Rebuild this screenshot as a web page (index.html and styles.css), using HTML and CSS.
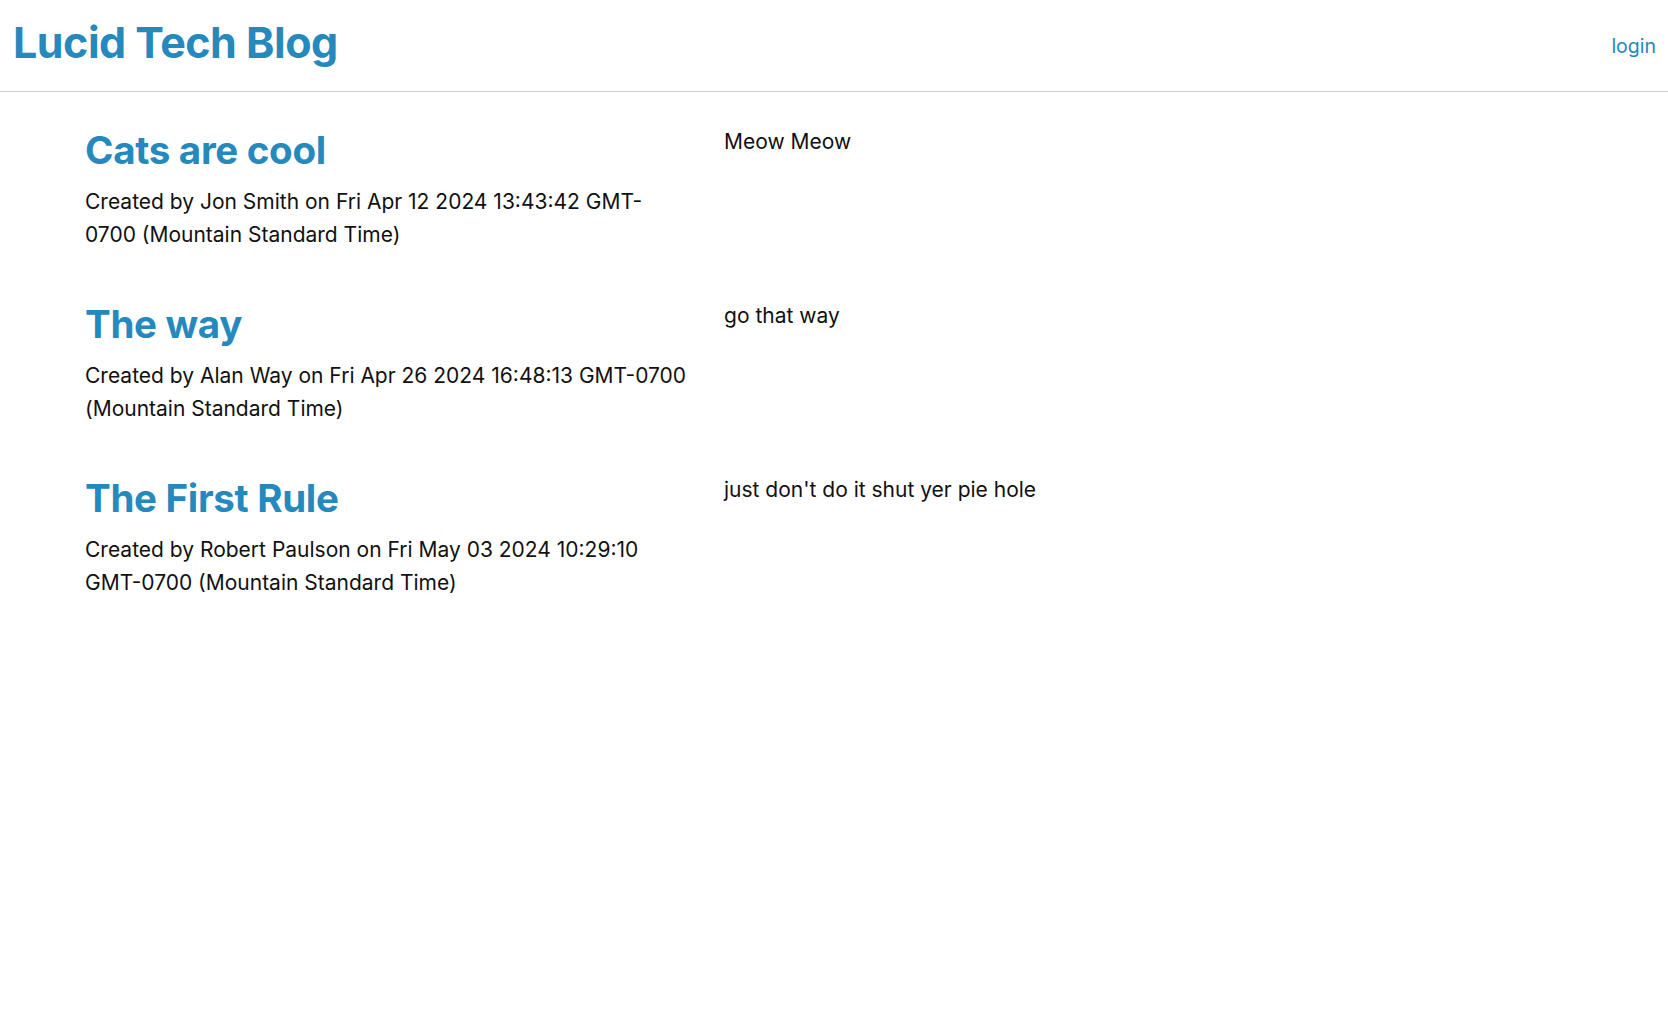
FILE: index.html
```html
<!DOCTYPE html>
<html lang="en">
<head>
<meta charset="utf-8">
<title>Lucid Tech Blog</title>
<link rel="stylesheet" href="styles.css">
</head>
<body>
<header class="topbar">
  <a class="brand" href="#">Lucid Tech Blog</a>
  <a class="login" href="#">login</a>
</header>
<main class="posts">
  <article class="post">
    <div class="post-head">
      <h2 class="post-title"><a href="#">Cats are cool</a></h2>
      <p class="meta">Created by Jon Smith on Fri Apr 12 2024 13:43:42 GMT-0700 (Mountain Standard Time)</p>
    </div>
    <p class="post-body">Meow Meow</p>
  </article>
  <article class="post">
    <div class="post-head">
      <h2 class="post-title"><a href="#">The way</a></h2>
      <p class="meta">Created by Alan Way on Fri Apr 26 2024 16:48:13 GMT-0700 (Mountain Standard Time)</p>
    </div>
    <p class="post-body">go that way</p>
  </article>
  <article class="post">
    <div class="post-head">
      <h2 class="post-title"><a href="#">The First Rule</a></h2>
      <p class="meta">Created by Robert Paulson on Fri May 03 2024 10:29:10 GMT-0700 (Mountain Standard Time)</p>
    </div>
    <p class="post-body">just don't do it shut yer pie hole</p>
  </article>
</main>
</body>
</html>
```
FILE: styles.css
```css
* { box-sizing: border-box; }
html, body { margin: 0; padding: 0; background: #fff; }
body {
  font-family: Inter, "Noto Sans", sans-serif;
  color: #111;
}
a { text-decoration: none; color: #2589bd; }

.topbar {
  height: 92px;
  border-bottom: 1px solid #cfcfcf;
  display: flex;
  justify-content: space-between;
  align-items: flex-start;
  padding: 0 12px 0 13px;
}
.brand {
  font-size: 43px;
  font-weight: 700;
  letter-spacing: -0.5px;
  line-height: 53px;
  margin-top: 16px;
}
.login {
  font-size: 19.5px;
  line-height: 24px;
  margin-top: 34px;
}

.posts {
  display: flex;
  flex-direction: column;
  gap: 48px;
  padding: 33px 85px;
}
.post {
  display: grid;
  grid-template-columns: 604px 1fr;
  column-gap: 35px;
  align-items: start;
}
.post-title {
  margin: 0;
  padding-top: 1px;
  font-size: 38.5px;
  line-height: 48px;
  font-weight: 700;
  letter-spacing: -0.3px;
}
.meta {
  margin: 11px 0 0;
  font-size: 21px;
  line-height: 33px;
}
.post-body {
  margin: 0;
  font-size: 21px;
  line-height: 33px;
}
```
